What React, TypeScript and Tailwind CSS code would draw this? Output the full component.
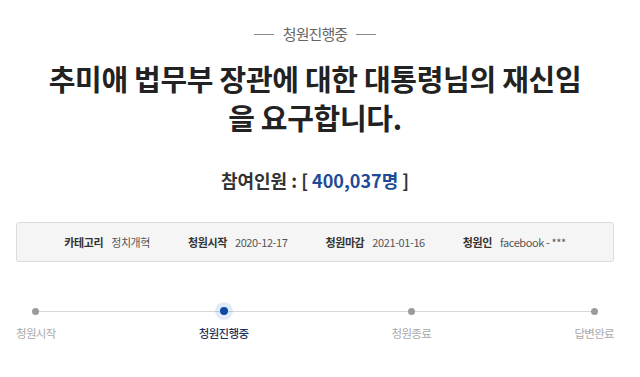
const STEPS = [
  { label: '청원시작', active: false },
  { label: '청원진행중', active: true },
  { label: '청원종료', active: false },
  { label: '답변완료', active: false },
]

const INFO = [
  { label: '카테고리', value: '정치개혁' },
  { label: '청원시작', value: '2020-12-17' },
  { label: '청원마감', value: '2021-01-16' },
  { label: '청원인', value: 'facebook - ***' },
]

export default function App() {
  return (
    <div className="w-[640px] h-[377px] bg-white overflow-hidden font-['Noto_Sans_CJK_KR','Noto_Sans',sans-serif] pl-4 pr-[26px] pt-[24px]">
      {/* status label */}
      <div className="flex items-center justify-center gap-[9px] h-5">
        <span className="w-5 h-px bg-[#8a8a8a]" />
        <span className="text-[15px] leading-5 text-[#666] tracking-[-0.9px]">청원진행중</span>
        <span className="w-5 h-px bg-[#8a8a8a]" />
      </div>

      <h1 className="mt-[15px] text-center text-[29px] leading-[39px] font-bold text-[#222] tracking-[-0.3px]">
        추미애 법무부 장관에 대한 대통령님의 재신임
        <br />
        을 요구합니다.
      </h1>

      <p className="mt-[31px] text-center text-[18px] leading-6 font-bold text-[#333]">
        참여인원 : [ <span className="text-[#1f4b96]">400,037명</span> ]
      </p>

      <div className="mt-[30px] h-[40px] rounded-[3px] border border-[#dcdcdc] bg-[#f5f5f5] flex items-center justify-center gap-[38px] text-[11px] tracking-[-0.4px]">
        {INFO.map(i => (
          <div key={i.label} className="flex items-center gap-[8px]">
            <span className="font-bold text-[#333]">{i.label}</span>
            <span className="text-[#555]">{i.value}</span>
          </div>
        ))}
      </div>

      <div className="relative mt-[41px] flex justify-between">
        <div className="absolute left-[20px] right-[19px] top-[8px] h-px bg-[#d6d6d6]" />
        {STEPS.map(s => (
          <div key={s.label} className="relative flex flex-col items-center gap-[6px]">
            <div className="h-4 flex items-center justify-center">
              {s.active ? (
                <span className="w-[8px] h-[8px] rounded-full bg-[#0d4aa3] shadow-[0_0_0_5px_rgba(90,150,235,0.18)]" />
              ) : (
                <span className="w-[7px] h-[7px] rounded-full bg-[#9b9b9b]" />
              )}
            </div>
            <span
              className={
                s.active
                  ? 'text-[11.5px] leading-4 font-medium text-[#1f355f] tracking-[-0.7px]'
                  : 'text-[11.5px] leading-4 text-[#a9a9a9] tracking-[-0.7px]'
              }
            >
              {s.label}
            </span>
          </div>
        ))}
      </div>
    </div>
  )
}
